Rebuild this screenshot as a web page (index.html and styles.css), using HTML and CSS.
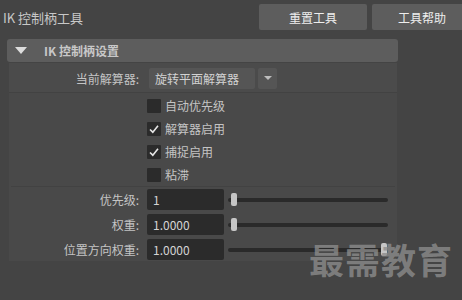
FILE: index.html
```html
<!DOCTYPE html>
<html lang="zh">
<head>
  <meta charset="UTF-8" />
  <title>IK 控制柄工具</title>
  <link rel="stylesheet" href="styles.css">
</head>
<body>

  <div class="topbar">
    <div class="title">IK 控制柄工具</div>
    <button class="tool-btn reset">重置工具</button>
    <button class="tool-btn help">工具帮助</button>
  </div>

  <div class="section-head">
    <span class="fold"></span>
    <span class="section-title">IK 控制柄设置</span>
  </div>

  <div class="panel">
    <!-- solver -->
    <div class="row solver-row">
      <div class="label">当前解算器:</div>
      <div class="dropdown">
        <div class="dropdown-text">旋转平面解算器</div>
        <div class="dropdown-arrow"><span></span></div>
      </div>
    </div>

    <!-- flags -->
    <div class="checks">
      <div class="row check-row">
        <div class="label"></div>
        <span class="box"></span><span class="check-text">自动优先级</span>
      </div>
      <div class="row check-row">
        <div class="label"></div>
        <span class="box on"><svg width="14" height="14" viewBox="0 0 14 14"><path d="M3 7.5 L5.8 10.2 L11 3.8" fill="none" stroke="#e6e6e6" stroke-width="1.6"/></svg></span><span class="check-text">解算器启用</span>
      </div>
      <div class="row check-row">
        <div class="label"></div>
        <span class="box on"><svg width="14" height="14" viewBox="0 0 14 14"><path d="M3 7.5 L5.8 10.2 L11 3.8" fill="none" stroke="#e6e6e6" stroke-width="1.6"/></svg></span><span class="check-text">捕捉启用</span>
      </div>
      <div class="row check-row">
        <div class="label"></div>
        <span class="box"></span><span class="check-text">粘滞</span>
      </div>
    </div>

    <!-- values -->
    <div class="values">
      <div class="row value-row">
        <div class="label">优先级:</div>
        <div class="field">1</div>
        <div class="slider"><span class="track"></span><span class="handle" style="left: 0%;"></span></div>
      </div>
      <div class="row value-row">
        <div class="label">权重:</div>
        <div class="field">1.0000</div>
        <div class="slider"><span class="track"></span><span class="handle" style="left: 0%;"></span></div>
      </div>
      <div class="row value-row">
        <div class="label">位置方向权重:</div>
        <div class="field">1.0000</div>
        <div class="slider"><span class="track"></span><span class="handle" style="left: 94%;"></span></div>
      </div>
    </div>
  </div>

  <div class="watermark">最需教育</div>

</body>
</html>
```

FILE: styles.css
```css
body {
  background-color: #444444;
  color: #c4c4c4;
  font-family: "Noto Sans CJK SC", "Liberation Sans", sans-serif;
  font-size: 12px;
  margin: 0;
  padding: 0;
  width: 462px;
  height: 300px;
  overflow: hidden;
  position: relative;
}
.topbar {
  display: flex;
  align-items: center;
  height: 34px;
}
.title {
  padding-left: 3px;
  font-size: 13px;
  color: #c8c8c8;
  flex: 1;
}
.tool-btn {
  height: 26px;
  border: none;
  border-radius: 2px;
  background-color: #5d5d5d;
  color: #eeeeee;
  font-family: inherit;
  font-size: 12px;
  padding: 0;
  cursor: pointer;
  flex: none;
  align-self: flex-start;
  margin-top: 4px;
}
.reset {
  width: 108px;
}
.help {
  width: 100px;
  margin-left: 5px;
  margin-right: -10px;
}
.section-head {
  display: flex;
  align-items: center;
  margin: 5px 0 0 7px;
  width: 391px;
  height: 23px;
  background-color: #5d5d5d;
  border-radius: 3px;
}
.fold {
  width: 0;
  height: 0;
  margin-left: 8px;
  border-left: 6px solid transparent;
  border-right: 6px solid transparent;
  border-top: 7px solid #dddddd;
}
.section-title {
  margin-left: 17px;
  font-weight: bold;
  color: #c8c8c8;
}
.panel {
  margin: 1px 0 0 9px;
  width: 388px;
  background-color: #494949;
  padding-bottom: 1px;
}
.row {
  display: flex;
  align-items: center;
}
.label {
  width: 130px;
  flex: none;
  text-align: right;
  margin-right: 8px;
}
.solver-row {
  height: 28px;
  padding-top: 1px;
  background-color: #4b4b4b;
  border-bottom: 1px solid #424242;
}
.dropdown {
  display: flex;
  height: 21px;
  margin-left: 2px;
}
.dropdown-text {
  width: 100px;
  padding-left: 6px;
  line-height: 21px;
  background-color: #555555;
  border-radius: 2px;
  color: #d2d2d2;
}
.dropdown-arrow {
  width: 19px;
  margin-left: 3px;
  background-color: #555555;
  border-radius: 2px;
  display: flex;
  align-items: center;
  justify-content: center;
}
.dropdown-arrow span {
  width: 0;
  height: 0;
  border-left: 4px solid transparent;
  border-right: 4px solid transparent;
  border-top: 4px solid #bdbdbd;
}
.checks {
  padding-top: 1px;
  border-bottom: 1px solid #424242;
  margin: 0 2px;
}
.check-row {
  height: 23px;
}
.check-row .label {
  width: 128px;
}
.box {
  width: 14px;
  height: 14px;
  background-color: #2b2b2b;
  border-radius: 1px;
  flex: none;
}
.box svg {
  display: block;
}
.check-text {
  margin-left: 4px;
}
.values {
  padding-top: 2px;
}
.value-row {
  height: 21px;
  margin-bottom: 4px;
}
.value-row:last-child {
  margin-bottom: 0;
}
.field {
  width: 71px;
  height: 21px;
  line-height: 21px;
  padding-left: 6px;
  background-color: #2b2b2b;
  border-radius: 2px;
  color: #d4d4d4;
  flex: none;
}
.slider {
  position: relative;
  width: 160px;
  height: 14px;
  margin-left: 4px;
}
.track {
  position: absolute;
  left: 0;
  right: 0;
  top: 5px;
  height: 4px;
  border-radius: 2px;
  background-color: #2a2a2a;
}
.handle {
  position: absolute;
  top: 0;
  margin-left: 3px;
  width: 6px;
  height: 13px;
  border-radius: 2px;
  background-color: #c6c6c6;
}
.watermark {
  position: absolute;
  left: 309px;
  top: 233px;
  font-size: 35px;
  font-weight: bold;
  color: rgba(140, 140, 140, 0.8);
  letter-spacing: 1px;
}
```
